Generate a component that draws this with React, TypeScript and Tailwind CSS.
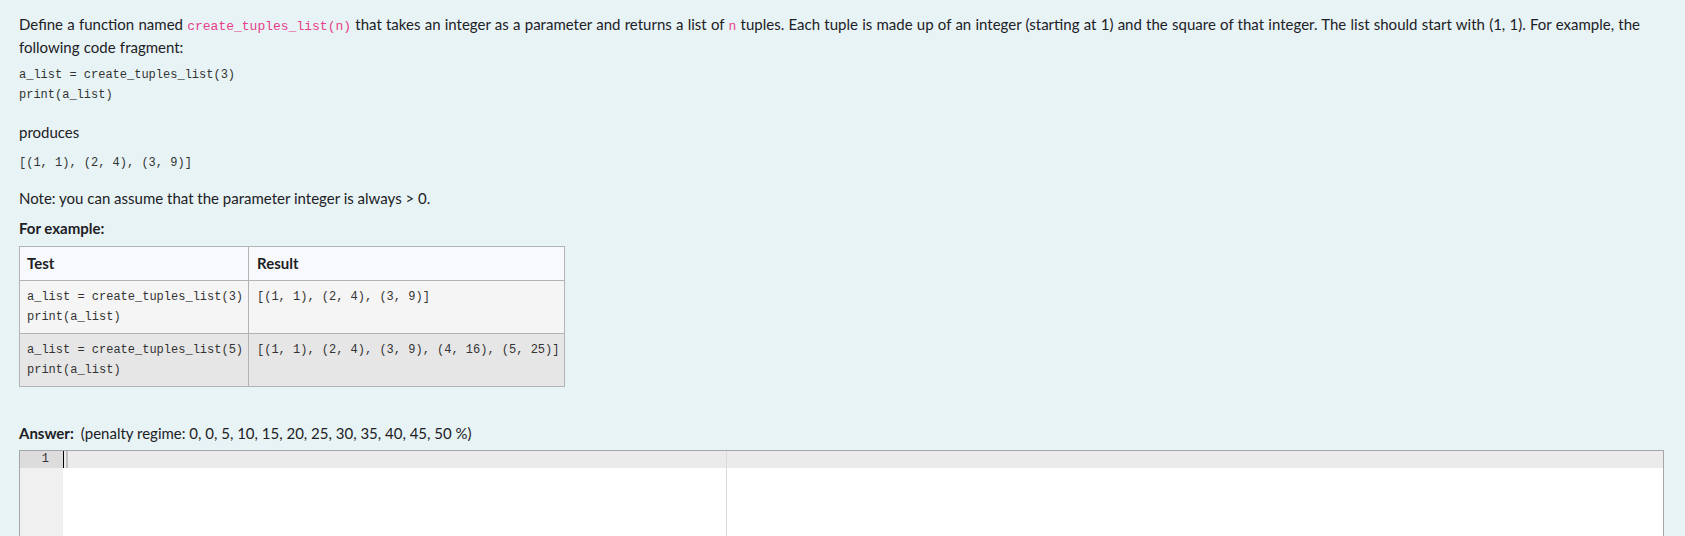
import React from "react";

const sans = "font-['Lato',sans-serif]";
const mono = "font-['Liberation_Mono',monospace]";
const codigoEnLinea = `${mono} text-[13px] leading-[1] text-[#e83e8c]`;

const ejemplos = [
  { test: ["a_list = create_tuples_list(3)", "print(a_list)"], result: "[(1, 1), (2, 4), (3, 9)]", bg: "bg-[#f5f5f5]" },
  {
    test: ["a_list = create_tuples_list(5)", "print(a_list)"],
    result: "[(1, 1), (2, 4), (3, 9), (4, 16), (5, 25)]",
    bg: "bg-[#e6e6e6]",
  },
];

function Code({ lines }: { lines: string[] }) {
  return (
    <pre className={`${mono} text-[12px] leading-[20px] text-[#333]`}>
      {lines.join("\n")}
    </pre>
  );
}

export default function App() {
  return (
    <div className={`${sans} min-h-[536px] bg-[#e7f3f5] pl-[19px] pr-[21px] pt-[13px] text-[15px] leading-[22.5px] text-[#1d2125]`}>
      <p className="[word-spacing:0.4px]">
        <span className="whitespace-nowrap">
          Define a function named <code className={codigoEnLinea}>create_tuples_list(n)</code> that takes an integer as
          a parameter and returns a list of <code className={codigoEnLinea}>n</code> tuples. Each tuple is made up of an
          integer (starting at 1) and the square of that integer. The list should start with (1, 1). For example, the
        </span>
        <br />
        following code fragment:
      </p>

      <div className="mt-[7px]">
        <Code lines={["a_list = create_tuples_list(3)", "print(a_list)"]} />
      </div>

      <p className="mt-[16px]">produces</p>
      <div className="mt-[9px]">
        <Code lines={["[(1, 1), (2, 4), (3, 9)]"]} />
      </div>

      <p className="mt-[14px]">Note: you can assume that the parameter integer is always &gt; 0.</p>
      <p className="mt-[8px] font-bold">For example:</p>

      <table className="mt-[6px] w-[545px] table-fixed border-collapse">
        <colgroup>
          <col className="w-[229px]" />
          <col className="w-[316px]" />
        </colgroup>
        <thead>
          <tr className="bg-[#f7f9fd]">
            <th className="border border-[#b3b3b3] px-[7px] py-[6px] text-left font-bold leading-[21px]">Test</th>
            <th className="border border-[#b3b3b3] px-[8px] py-[6px] text-left font-bold leading-[21px]">Result</th>
          </tr>
        </thead>
        <tbody>
          {ejemplos.map((e) => (
            <tr key={e.result} className={e.bg}>
              <td className="border border-[#b3b3b3] px-[7px] py-[6px] align-top">
                <Code lines={e.test} />
              </td>
              <td className="border border-[#b3b3b3] px-[8px] py-[6px] align-top">
                <Code lines={[e.result]} />
              </td>
            </tr>
          ))}
        </tbody>
      </table>

      <p className="mt-[35px]">
        <span className="font-bold">Answer:</span>
        <span className="ml-[7px]">(penalty regime: 0, 0, 5, 10, 15, 20, 25, 30, 35, 40, 45, 50 %)</span>
      </p>

      {/* editor de respuesta: gutter, línea activa y margen de impresión */}
      <div className="mt-[6px] flex h-[140px] border border-[#a6a6a6] bg-white">
        <div className="w-[43px] shrink-0 bg-[#f0f0f0]">
          <div className={`${mono} h-[17px] bg-[#dcdcdc] pr-[14px] text-right text-[12px] leading-[17px] text-[#333]`}>1</div>
        </div>
        <div className="relative flex-1">
          <div className="h-[17px] bg-[#ebebeb]" />
          <div className="absolute left-0 top-0 h-[17px] w-px bg-black" />
          <div className="absolute left-[3px] top-0 h-[17px] w-[2px] bg-[#c0c0c0]" />
          <div className="absolute left-[663px] top-0 h-full w-px bg-[#dadada]" />
        </div>
      </div>
    </div>
  );
}
